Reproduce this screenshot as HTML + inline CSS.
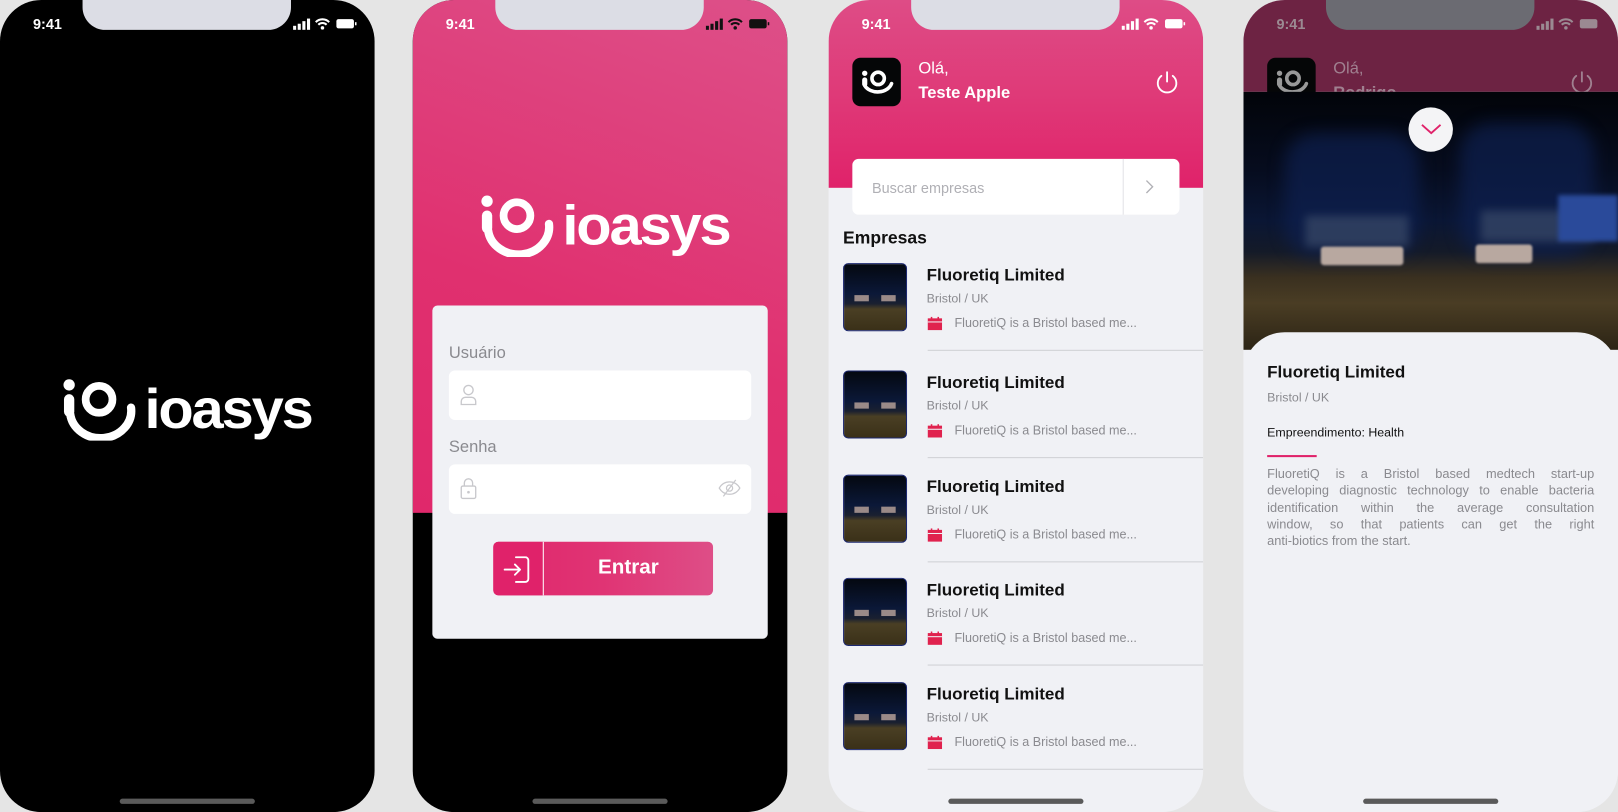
<!DOCTYPE html>
<html><head><meta charset="utf-8"><style>
*{margin:0;padding:0;box-sizing:border-box}
html,body{width:1618px;height:812px;overflow:hidden;background:#e5e5e5;font-family:"Liberation Sans",Arial,sans-serif}
#s{position:absolute;left:0;top:0;width:1568px;height:787px;transform:scale(1.03189);transform-origin:0 0}
.ph{position:absolute;top:0;width:363px;height:787px;border-radius:40px 40px 40px 40px;overflow:hidden}
.notch{position:absolute;left:80px;top:0;width:202px;height:29px;background:#dcdde5;border-radius:0 0 22px 22px;z-index:5}
.sb{position:absolute;left:0;top:0;width:100%;height:40px;z-index:6;color:#fff}
.tm{position:absolute;left:32px;top:15px;font-size:14px;font-weight:bold}
.ic{position:absolute;left:284px;top:17px}
.home{position:absolute;left:116px;top:774px;width:131px;height:5px;border-radius:3px;background:#5a5a5a;z-index:6}
.a{position:absolute}
.logo{position:absolute}
.t{position:absolute;white-space:nowrap}
.pl{height:16.3px;text-align:justify;text-align-last:justify;white-space:normal}
</style></head><body><div id="s">

<!-- phone 1 -->
<div class="ph" style="left:0;background:#000">
 <div class="notch"></div>
 <div class="sb"><div class="tm">9:41</div>
  <svg class="ic" width="62" height="12" viewBox="0 0 62 12"><rect x="0" y="8" width="3" height="4" fill="#fff"/><rect x="4.5" y="6" width="3" height="6" fill="#fff"/><rect x="9" y="3.5" width="3" height="8.5" fill="#fff"/><rect x="13.5" y="1" width="3" height="11" fill="#fff"/><path d="M22 4.5a9 9 0 0 1 13 0M24.5 7a5.5 5.5 0 0 1 8 0" stroke="#fff" stroke-width="2" fill="none"/><circle cx="28.5" cy="10" r="1.7" fill="#fff"/><rect x="42" y="1.5" width="17" height="9" rx="2" fill="#fff"/><rect x="60" y="4.5" width="1.5" height="3" fill="#fff"/></svg></div>
 <svg class="logo" style="left:60px;top:365px" width="243" height="62" viewBox="0 0 243 62"><circle cx="7" cy="8" r="5.5" fill="#fff"/><rect x="2" y="17" width="10" height="22" rx="5" fill="#fff"/><circle cx="36" cy="22" r="13" stroke="#fff" stroke-width="7.5" fill="none"/><path d="M8 36 A 29 26 0 0 0 67 30" stroke="#fff" stroke-width="8" fill="none" stroke-linecap="round"/><text x="80" y="50" fill="#fff" font-size="54" font-weight="bold" letter-spacing="-2" textLength="162" lengthAdjust="spacingAndGlyphs" font-family="Liberation Sans,sans-serif">ioasys</text></svg>
 <div class="home"></div>
</div>

<!-- phone 2 -->
<div class="ph" style="left:400px;background:#000">
 <div class="a" style="left:0;top:0;width:363px;height:497px;background:linear-gradient(200deg,#dd5089 0%,#e0306f 60%,#e0286b 100%)"></div>
 <div class="notch"></div>
 <div class="sb"><div class="tm" style="color:#fff">9:41</div>
  <svg class="ic" width="62" height="12" viewBox="0 0 62 12"><rect x="0" y="8" width="3" height="4" fill="#111"/><rect x="4.5" y="6" width="3" height="6" fill="#111"/><rect x="9" y="3.5" width="3" height="8.5" fill="#111"/><rect x="13.5" y="1" width="3" height="11" fill="#111"/><path d="M22 4.5a9 9 0 0 1 13 0M24.5 7a5.5 5.5 0 0 1 8 0" stroke="#111" stroke-width="2" fill="none"/><circle cx="28.5" cy="10" r="1.7" fill="#111"/><rect x="42" y="1.5" width="17" height="9" rx="2" fill="#111"/><rect x="60" y="4.5" width="1.5" height="3" fill="#111"/></svg></div>
 <svg class="logo" style="left:65px;top:187px" width="243" height="62" viewBox="0 0 243 62"><circle cx="7" cy="8" r="5.5" fill="#fff"/><rect x="2" y="17" width="10" height="22" rx="5" fill="#fff"/><circle cx="36" cy="22" r="13" stroke="#fff" stroke-width="7.5" fill="none"/><path d="M8 36 A 29 26 0 0 0 67 30" stroke="#fff" stroke-width="8" fill="none" stroke-linecap="round"/><text x="80" y="50" fill="#fff" font-size="54" font-weight="bold" letter-spacing="-2" textLength="162" lengthAdjust="spacingAndGlyphs" font-family="Liberation Sans,sans-serif">ioasys</text></svg>
 <div class="a" style="left:19px;top:296px;width:325px;height:323px;background:#f0f1f5;border-radius:5px"></div>
 <div class="t" style="left:35px;top:334px;font-size:16px;color:#8a8a8f">Usuário</div>
 <div class="a" style="left:35px;top:359px;width:293px;height:48px;background:#fff;border-radius:6px"></div>
 <svg class="a" style="left:45px;top:372px" width="18" height="22" viewBox="0 0 18 22"><circle cx="9" cy="6" r="4.5" stroke="#c8c8cc" stroke-width="1.3" fill="none"/><path d="M2 20v-3a4 4 0 0 1 4-4h6a4 4 0 0 1 4 4v3z" stroke="#c8c8cc" stroke-width="1.3" fill="none"/></svg>
 <div class="t" style="left:35px;top:425px;font-size:16px;color:#8a8a8f">Senha</div>
 <div class="a" style="left:35px;top:450px;width:293px;height:48px;background:#fff;border-radius:6px"></div>
 <svg class="a" style="left:46px;top:462px" width="16" height="22" viewBox="0 0 16 22"><path d="M4 9V6a4 4 0 0 1 8 0v3" stroke="#c8c8cc" stroke-width="1.3" fill="none"/><rect x="1" y="9" width="14" height="12" rx="1.5" stroke="#c8c8cc" stroke-width="1.3" fill="none"/><circle cx="8" cy="15" r="1.3" fill="#c8c8cc"/></svg>
 <svg class="a" style="left:296px;top:464px" width="22" height="18" viewBox="0 0 22 18"><path d="M1 9C4 4 8 3 11 3s7 1 10 6c-3 5-7 6-10 6S4 14 1 9z" stroke="#c8c8cc" stroke-width="1.2" fill="none"/><circle cx="11" cy="9" r="3" stroke="#c8c8cc" stroke-width="1.2" fill="none"/><path d="M17 1L5 17" stroke="#c8c8cc" stroke-width="1.2"/></svg>
 <div class="a" style="left:78px;top:525px;width:213px;height:52px;border-radius:5px;background:linear-gradient(90deg,#e0266b 0%,#e03474 50%,#de4e87 100%);overflow:hidden">
  <div class="a" style="left:0;top:0;width:48px;height:52px;background:#e0226a"></div>
  <div class="a" style="left:48px;top:0;width:1px;height:52px;background:#fff"></div>
  <svg class="a" style="left:10px;top:14px" width="28" height="26" viewBox="0 0 28 26"><path d="M12 1h9a3 3 0 0 1 3 3v18a3 3 0 0 1-3 3h-9M1 13h15M11 8l5 5-5 5" stroke="#fff" stroke-width="1.8" fill="none" stroke-linecap="round" stroke-linejoin="round"/></svg>
  <div class="t" style="left:49px;width:164px;top:14px;text-align:center;color:#fff;font-size:20px;font-weight:bold">Entrar</div>
 </div>
 <div class="home" style="background:#5a5a5a"></div>
</div>

<!-- phone 3 -->
<div class="ph" style="left:803px;background:#f0f1f5">
 <div class="a" style="left:0;top:0;width:363px;height:182px;background:linear-gradient(180deg,#de4c86 0%,#df3a78 50%,#e0226a 100%)"></div>
 <div class="notch"></div>
 <div class="sb"><div class="tm">9:41</div>
  <svg class="ic" width="62" height="12" viewBox="0 0 62 12"><rect x="0" y="8" width="3" height="4" fill="#fff"/><rect x="4.5" y="6" width="3" height="6" fill="#fff"/><rect x="9" y="3.5" width="3" height="8.5" fill="#fff"/><rect x="13.5" y="1" width="3" height="11" fill="#fff"/><path d="M22 4.5a9 9 0 0 1 13 0M24.5 7a5.5 5.5 0 0 1 8 0" stroke="#fff" stroke-width="2" fill="none"/><circle cx="28.5" cy="10" r="1.7" fill="#fff"/><rect x="42" y="1.5" width="17" height="9" rx="2" fill="#fff"/><rect x="60" y="4.5" width="1.5" height="3" fill="#fff"/></svg></div>
 <div class="a" style="left:23px;top:56px;width:47px;height:47px;background:#050607;border-radius:8px"></div>
 <svg class="a" style="left:31px;top:64px" width="32" height="30" viewBox="0 0 32 30"><circle cx="4" cy="7" r="2.6" fill="#fff"/><rect x="1.5" y="11" width="5" height="9" rx="2.5" fill="#fff"/><circle cx="17" cy="12" r="6" stroke="#fff" stroke-width="3.5" fill="none"/><path d="M4 19a14 11 0 0 0 26-2" stroke="#fff" stroke-width="3.5" fill="none" stroke-linecap="round"/></svg>
 <div class="t" style="left:87px;top:58px;font-size:16px;color:#fff">Olá,</div>
 <div class="t" style="left:87px;top:82px;font-size:16px;font-weight:bold;color:#fff">Teste Apple</div>
 <svg class="a" style="left:316px;top:68px" width="24" height="24" viewBox="0 0 24 24"><path d="M12 2v9" stroke="#fff" stroke-width="1.8" stroke-linecap="round"/><path d="M6.5 5.5a9 9 0 1 0 11 0" stroke="#fff" stroke-width="1.8" fill="none" stroke-linecap="round"/></svg>
 <div class="a" style="left:23px;top:154px;width:317px;height:54px;background:#fff;border-radius:6px"></div>
 <div class="a" style="left:285px;top:154px;width:1px;height:54px;background:#e3e3e6"></div>
 <div class="t" style="left:42px;top:174px;font-size:14px;color:#b0b0b5">Buscar empresas</div>
 <svg class="a" style="left:306px;top:174px" width="10" height="14" viewBox="0 0 10 14"><path d="M2 1l6 6-6 6" stroke="#b0b0b5" stroke-width="1.3" fill="none"/></svg>
 <div class="t" style="left:14px;top:221px;font-size:17px;font-weight:bold;color:#111">Empresas</div>
 <div id="items"></div>
 <div class="home" style="background:#5a5a5a"></div>
</div>

<!-- phone 4 -->
<div class="ph" style="left:1205px;background:#f0f1f5">
 <div class="a" style="left:0;top:0;width:363px;height:89px;background:#6d2343"></div>
 <div class="notch" style="background:#6b6b72"></div>
 <div class="sb"><div class="tm" style="color:#9b8a92">9:41</div>
  <svg class="ic" width="62" height="12" viewBox="0 0 62 12"><g fill="#9b8a92"><rect x="0" y="8" width="3" height="4"/><rect x="4.5" y="6" width="3" height="6"/><rect x="9" y="3.5" width="3" height="8.5"/><rect x="13.5" y="1" width="3" height="11"/><circle cx="28.5" cy="10" r="1.7"/><rect x="42" y="1.5" width="17" height="9" rx="2"/></g><path d="M22 4.5a9 9 0 0 1 13 0M24.5 7a5.5 5.5 0 0 1 8 0" stroke="#9b8a92" stroke-width="2" fill="none"/></svg></div>
 <div class="a" style="left:23px;top:56px;width:47px;height:47px;background:#050607;border-radius:8px"></div>
 <svg class="a" style="left:31px;top:64px" width="32" height="30" viewBox="0 0 32 30"><circle cx="4" cy="7" r="2.6" fill="#999"/><rect x="1.5" y="11" width="5" height="9" rx="2.5" fill="#999"/><circle cx="17" cy="12" r="6" stroke="#999" stroke-width="3.5" fill="none"/><path d="M4 19a14 11 0 0 0 26-2" stroke="#999" stroke-width="3.5" fill="none" stroke-linecap="round"/></svg>
 <div class="t" style="left:87px;top:58px;font-size:16px;color:#a08090">Olá,</div>
 <div class="t" style="left:87px;top:82px;font-size:16px;font-weight:bold;color:#a08090">Rodrigo</div>
 <svg class="a" style="left:316px;top:68px" width="24" height="24" viewBox="0 0 24 24"><path d="M12 2v9" stroke="#a08090" stroke-width="1.8" stroke-linecap="round"/><path d="M6.5 5.5a9 9 0 1 0 11 0" stroke="#a08090" stroke-width="1.8" fill="none" stroke-linecap="round"/></svg>
 <div class="a" style="left:0;top:89px;width:363px;height:250px;overflow:hidden;background:linear-gradient(180deg,#020409 0%,#060c1e 30%,#0a1634 50%,#141a28 62%,#3a3020 72%,#4a3d24 82%,#2c2415 100%)">
  <div class="a" style="left:40px;top:40px;width:130px;height:120px;background:#0e2050;border-radius:30px;opacity:.7;filter:blur(8px)"></div>
  <div class="a" style="left:210px;top:30px;width:130px;height:130px;background:#0e2050;border-radius:30px;opacity:.7;filter:blur(8px)"></div>
  <div class="a" style="left:60px;top:120px;width:100px;height:30px;background:#3a4a68;opacity:.7;filter:blur(4px)"></div>
  <div class="a" style="left:230px;top:115px;width:110px;height:30px;background:#3a4a68;opacity:.7;filter:blur(4px)"></div>
  <div class="a" style="left:75px;top:150px;width:80px;height:18px;background:#b8a8a0;border-radius:3px;filter:blur(1px)"></div>
  <div class="a" style="left:225px;top:148px;width:55px;height:18px;background:#b8a8a0;border-radius:3px;filter:blur(1px)"></div>
  <div class="a" style="left:305px;top:100px;width:58px;height:45px;background:#2a4a9a;filter:blur(2px)"></div>
 </div>
 <div class="a" style="left:160px;top:104px;width:43px;height:43px;border-radius:50%;background:#f4f4f6"></div>
 <svg class="a" style="left:171px;top:118px" width="22" height="14" viewBox="0 0 22 14"><path d="M2 3l9 8 9-8" stroke="#e0226a" stroke-width="1.8" fill="none"/></svg>
 <div class="a" style="left:0;top:322px;width:363px;height:465px;background:#f0f1f5;border-radius:40px 40px 0 0"></div>
 <div class="t" style="left:23px;top:352px;font-size:16.5px;font-weight:bold;color:#111">Fluoretiq Limited</div>
 <div class="t" style="left:23px;top:378px;font-size:12px;color:#8a8a8f">Bristol / UK</div>
 <div class="t" style="left:23px;top:412px;font-size:12px;color:#111">Empreendimento: Health</div>
 <div class="a" style="left:23px;top:441px;width:48px;height:2px;background:#e0226a"></div>
 <div class="a" style="left:23px;top:451px;width:317px;font-size:12.4px;line-height:16.3px;color:#8a8a8f">
  <div class="pl">FluoretiQ is a Bristol based medtech start-up</div>
  <div class="pl">developing diagnostic technology to enable bacteria</div>
  <div class="pl">identification within the average consultation</div>
  <div class="pl">window, so that patients can get the right</div>
  <div>anti-biotics from the start.</div>
 </div>
 <div class="home" style="background:#5a5a5a"></div>
</div>
</div>
<script>
var ys=[255,359,460,560,661],h='';
ys.forEach(function(y){
h+='<div class="a" style="left:14px;top:'+y+'px;width:62px;height:66px;border-radius:5px;border:1px solid #1c2870;background:linear-gradient(180deg,#040810 0%,#0b1838 45%,#1a2030 60%,#4a3f24 68%,#3a3018 100%)"><div class="a" style="left:10px;top:30px;width:14px;height:6px;background:#9a8a88"></div><div class="a" style="left:36px;top:30px;width:14px;height:6px;background:#9a8a88"></div></div>';
h+='<div class="t" style="left:95px;top:'+(y+3)+'px;font-size:16.5px;font-weight:bold;color:#111">Fluoretiq Limited</div>';
h+='<div class="t" style="left:95px;top:'+(y+27)+'px;font-size:12px;color:#8a8a8f">Bristol / UK</div>';
h+='<svg class="a" style="left:96px;top:'+(y+52)+'px" width="14" height="13" viewBox="0 0 14 13"><rect x="0" y="1.5" width="14" height="11.5" fill="#e0224e"/><rect x="0" y="4.5" width="14" height="1" fill="#f0f1f5"/><rect x="3" y="0" width="1.5" height="3" fill="#e0224e"/><rect x="9.5" y="0" width="1.5" height="3" fill="#e0224e"/></svg>';
h+='<div class="t" style="left:122px;top:'+(y+51)+'px;font-size:12.2px;color:#8a8a8f">FluoretiQ is a Bristol based me...</div>';
h+='<div class="a" style="left:96px;top:'+(y+84)+'px;width:267px;height:1px;background:#cfd0d4"></div>';
});
document.getElementById('items').innerHTML=h;
</script>
</body></html>
